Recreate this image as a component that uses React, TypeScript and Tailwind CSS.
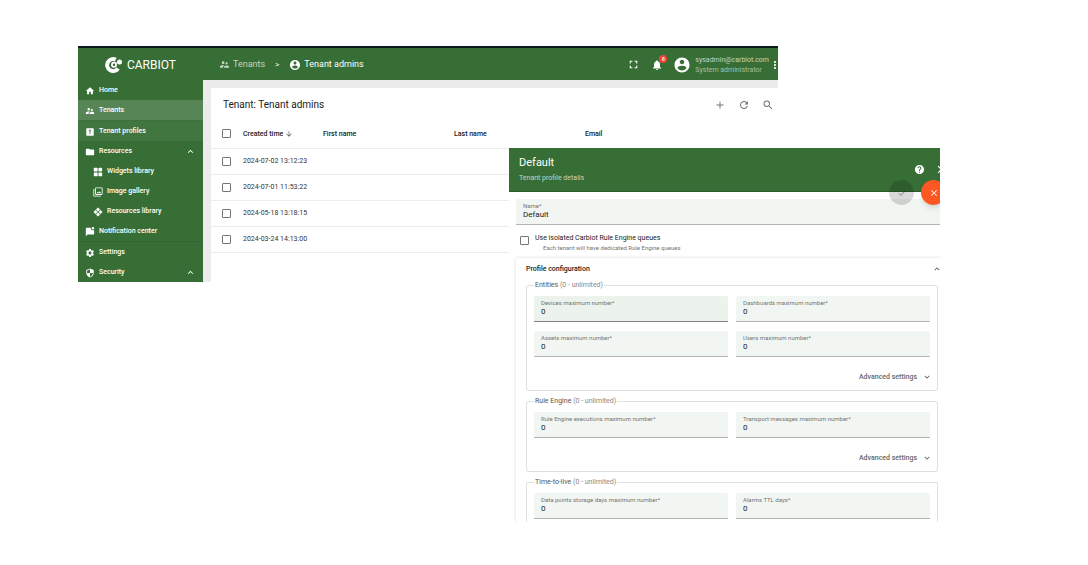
import type { ReactNode } from 'react'
import {
  MdAdd,
  MdArrowDownward,
  MdCheck,
  MdClose,
  MdExpandLess,
  MdExpandMore,
  MdFilter,
  MdFolder,
  MdFullscreen,
  MdHelp,
  MdHome,
  MdMoreVert,
  MdNotifications,
  MdRefresh,
  MdSearch,
  MdSecurity,
  MdSettings,
  MdSupervisorAccount,
} from 'react-icons/md'

const Logo = () => (
  <svg viewBox="0 0 36 36" className="w-[18px] h-[18px]" fill="none">
    <path d="M21.5 7.2A12 12 0 1 0 26.200 25" stroke="white" strokeWidth="8" />
    <circle cx="18" cy="17.500" r="4.200" stroke="white" strokeWidth="3.400" />
    <path d="M21 15l7-3" stroke="white" strokeWidth="2" />
    <circle cx="29" cy="12" r="5" fill="white" />
  </svg>
)

const Person = ({ size, className }: { size: number; className?: string }) => (
  <svg viewBox="0 0 24 24" width={size} height={size} fill="white" className={className}>
    <path d="M12 2C6.480 2 2 6.480 2 12s4.480 10 10 10 10-4.480 10-10S17.520 2 12 2zm0 3c1.660 0 3 1.340 3 3s-1.340 3-3 3-3-1.340-3-3 1.340-3 3-3zm0 14.200c-2.500 0-4.710-1.280-6-3.220.030-1.990 4-3.080 6-3.080 1.990 0 5.970 1.090 6 3.080-1.290 1.940-3.500 3.220-6 3.220z" />
  </svg>
)

const TenantBox = () => (
  <svg viewBox="0 0 24 24" className="w-[10px] h-[10px]">
    <rect x="3" y="3" width="18" height="18" rx="2" fill="white" />
    <path d="M9 8h6M12 8v9" stroke="#427640" strokeWidth="2" />
  </svg>
)

const Widgets = () => (
  <svg viewBox="0 0 24 24" className="w-[10px] h-[10px]" fill="white">
    <rect x="2" y="2" width="9" height="9" rx="1" />
    <rect x="13" y="2" width="9" height="9" rx="3" />
    <rect x="2" y="13" width="9" height="9" rx="1" />
    <rect x="13" y="13" width="9" height="9" rx="1" />
  </svg>
)

const RhombusSplit = () => (
  <svg viewBox="0 0 24 24" className="w-[10px] h-[10px]" fill="white">
    <path
      d="M12 2l4 4-4 4-4-4zM12 14l4 4-4 4-4-4zM6 8l4 4-4 4-4-4zM18 8l4 4-4 4-4-4z"
      stroke="white"
      strokeWidth="2"
      strokeLinejoin="round"
    />
  </svg>
)

const MessageBadge = () => (
  <svg viewBox="0 0 24 24" className="w-[10px] h-[10px]" fill="white">
    <path d="M22 7v9a2 2 0 0 1-2 2H6l-4 4V4a2 2 0 0 1 2-2h10.100A5 5 0 0 0 19 8c1.100 0 2.200-.4 3-1z" />
    <circle cx="19" cy="3" r="3" />
  </svg>
)

const menu = [
  { name: 'Home', icon: <MdHome size={10} /> },
  { name: 'Tenants', icon: <MdSupervisorAccount size={10} />, style: 'bg-[#588556]' },
  { name: 'Tenant profiles', icon: <TenantBox />, style: 'bg-[#427640] border-t border-[#3d723b]' },
  { name: 'Resources', icon: <MdFolder size={10} />, open: true },
  { name: 'Widgets library', icon: <Widgets />, sub: true },
  { name: 'Image gallery', icon: <MdFilter size={10} />, sub: true },
  { name: 'Resources library', icon: <RhombusSplit />, sub: true },
  { name: 'Notification center', icon: <MessageBadge /> },
  { name: 'Settings', icon: <MdSettings size={10} />, style: 'border-t border-[#326630]' },
  { name: 'Security', icon: <MdSecurity size={10} />, open: true },
]

const rows = ['2024-07-02 13:12:23', '2024-07-01 11:53:22', '2024-05-18 13:18:15', '2024-03-24 14:13:00']

function Checkbox({ label, id }: { label?: string; id?: string }) {
  return (
    <input
      type="checkbox"
      id={id}
      aria-label={label}
      className="appearance-none block w-[9px] h-[9px] shrink-0 border border-[#757575] rounded-[1px] bg-white"
    />
  )
}

function Sidebar() {
  return (
    <aside className="w-[125px] shrink-0 bg-[#376e35] text-white">
      <div className="h-8 flex items-center justify-center gap-1 pt-px text-[12px]">
        <Logo />
        <span>CARBIOT</span>
      </div>
      <nav>
        {menu.map((item) => (
          <a key={item.name} href="#" className={`block ${item.style ?? ''}`}>
            <span className={`h-5 flex items-center gap-1 pt-px pr-[7px] text-[7px] font-medium ${item.sub ? 'pl-[15px]' : 'pl-[7px]'}`}>
              {item.icon}
              <span className="grow">{item.name}</span>
              {item.open && <MdExpandLess size={11} />}
            </span>
          </a>
        ))}
      </nav>
    </aside>
  )
}

function TopBar() {
  return (
    <header className="h-8 flex items-center justify-between bg-[#376e35] text-white pl-4 pt-px text-[9px] overflow-hidden">
      <div className="flex items-center">
        <a href="#" className="flex items-center gap-[3px] text-[#c3d4c2]">
          <MdSupervisorAccount size={11} />
          Tenants
        </a>
        <span className="px-[10px] text-[8px]">&gt;</span>
        <a href="#" className="flex items-center gap-[3px]">
          <Person size={12} />
          Tenant admins
        </a>
      </div>
      <div className="flex items-center">
        <button aria-label="Fullscreen">
          <MdFullscreen size={13} />
        </button>
        <button aria-label="Notifications" className="relative ml-[11px]">
          <MdNotifications size={12} />
          <span className="absolute -top-1 -right-1 w-2 h-2 rounded-full bg-[#f44336] text-[5px] leading-[8px] font-medium text-center">8</span>
        </button>
        <Person size={18} className="ml-[10px]" />
        <div className="ml-1 text-[7px] leading-[10px] text-[#c3d4c2]">
          <div>sysadmin@carbiot.com</div>
          <div className="text-[#a5bfa4]">System administrator</div>
        </div>
        <button aria-label="More" className="-mr-[3px]">
          <MdMoreVert size={12} />
        </button>
      </div>
    </header>
  )
}

function TenantAdmins() {
  return (
    <section className="grow bg-white">
      <div className="h-8 flex items-center justify-between pl-3 pr-1 pt-px text-[#212121]">
        <h1 className="text-[10px]">Tenant: Tenant admins</h1>
        <div className="flex gap-[12px] text-[#757575]">
          <button aria-label="Add"><MdAdd size={12} /></button>
          <button aria-label="Refresh"><MdRefresh size={12} /></button>
          <button aria-label="Search"><MdSearch size={12} /></button>
        </div>
      </div>
      <table className="w-full table-fixed text-left text-[7px] text-[#333]">
        <thead>
          <tr className="h-[28px] border-b border-[#ececec] text-[#212121]">
            <th className="w-8 pl-[11px]"><Checkbox label="Select all" /></th>
            <th className="w-20 font-medium">
              <span className="flex items-center gap-[2px]">Created time <MdArrowDownward size={8} className="text-[#555]" /></span>
            </th>
            <th className="w-[131px] font-medium">First name</th>
            <th className="w-[131px] font-medium">Last name</th>
            <th className="font-medium">Email</th>
          </tr>
        </thead>
        <tbody>
          {rows.map((date) => (
            <tr key={date} className="h-[26px] border-b border-[#ececec]">
              <td className="pl-[11px]"><Checkbox label={date} /></td>
              <td className="whitespace-nowrap">{date}</td>
              <td></td>
              <td></td>
              <td></td>
            </tr>
          ))}
        </tbody>
      </table>
    </section>
  )
}

function Field({ id, label, value, active }: { id: string; label: string; value: string; active?: boolean }) {
  return (
    <div className={`h-[26px] pt-[3px] px-[7px] rounded-t-[2px] border-b ${active ? 'bg-[#ebf3ec] border-[#808080]' : 'bg-[#f1f6f2] border-[#b2b5b2]'}`}>
      <label htmlFor={id} className="block text-[6px] leading-[8px] text-[#757575]">{label}</label>
      <input id={id} defaultValue={value} className="block w-full h-[10px] text-[8px] leading-[10px] text-[#212121] bg-transparent outline-none" />
    </div>
  )
}

function Group({ title, children, last }: { title: string; children: ReactNode; last?: boolean }) {
  return (
    <fieldset className={`px-[7px] border-[#e0e0e0] min-w-0 ${last ? 'border-x border-t rounded-t-[2px] pb-[3px]' : 'border rounded-[2px] mb-[5px]'}`}>
      <legend className="px-[1px] text-[7px] leading-[10px] text-[#888]">
        <span className="text-[#555]">{title}</span> (0 - unlimited)
      </legend>
      <div className="grid grid-cols-2 gap-x-2 gap-y-[9px] pt-[6px]">{children}</div>
      {!last && (
        <div className="flex justify-end pt-[14px] pb-[7px]">
          <button className="h-3 flex items-center gap-[5px] -mr-[2px] text-[7px] font-medium text-[#666]">
            Advanced settings <MdExpandMore size={10} />
          </button>
        </div>
      )}
    </fieldset>
  )
}

function ProfileDrawer() {
  return (
    <section className="relative bg-white overflow-hidden text-[#212121]">
      <header className="h-11 flex justify-between bg-[#376e35] text-white pl-[10px] border-b border-[#2c5c2a]">
        <div>
          <h2 className="pt-2 text-[11px] leading-[14px]">Default</h2>
          <p className="pt-[2px] text-[7px] leading-[12px] text-[#c3d4c2]">Tenant profile details</p>
        </div>
        <div className="flex items-center gap-[10px] -mr-2">
          <button aria-label="Help"><MdHelp size={11} /></button>
          <button aria-label="Close"><MdClose size={13} /></button>
        </div>
      </header>
      <div className="absolute top-8 -right-[6px] flex gap-[7px]">
        <button aria-label="Apply" className="w-[25px] h-[25px] rounded-full bg-black/15 text-black/35 flex items-center justify-center">
          <MdCheck size={10} />
        </button>
        <button aria-label="Cancel" className="w-[25px] h-[25px] rounded-full bg-[#ff5722] text-white flex items-center justify-center shadow-md">
          <MdClose size={10} />
        </button>
      </div>
      <div className="pl-[7px] pt-[7px]">
        <div className="-mr-2">
          <Field id="name" label="Name*" value="Default" />
        </div>
        <div className="flex gap-[6px] pt-[9px] pl-1 h-[33px] text-[7px]">
          <div className="pt-[2px]"><Checkbox id="isolated" /></div>
          <div>
            <label htmlFor="isolated" className="block leading-[9px]">Use isolated Carbiot Rule Engine queues</label>
            <p className="pl-2 text-[6px] leading-[9px] text-[#757575]">Each tenant will have dedicated Rule Engine queues</p>
          </div>
        </div>
        <div className="-mr-2 pl-[10px] pr-[10px] shadow-[0_0_3px_rgba(0,0,0,0.15)]">
          <div className="h-[22px] flex items-center justify-between">
            <h3 className="text-[7px] font-medium">Profile configuration</h3>
            <button aria-label="Collapse" className="-mr-1 text-[#666]"><MdExpandLess size={10} /></button>
          </div>
          <Group title="Entities">
            <Field id="devices" label="Devices maximum number*" value="0" active />
            <Field id="dashboards" label="Dashboards maximum number*" value="0" />
            <Field id="assets" label="Assets maximum number*" value="0" />
            <Field id="users" label="Users maximum number*" value="0" />
          </Group>
          <Group title="Rule Engine">
            <Field id="executions" label="Rule Engine executions maximum number*" value="0" />
            <Field id="transport" label="Transport messages maximum number*" value="0" />
          </Group>
          <Group title="Time-to-live" last>
            <Field id="storage" label="Data points storage days maximum number*" value="0" />
            <Field id="alarms" label="Alarms TTL days*" value="0" />
          </Group>
        </div>
      </div>
    </section>
  )
}

export default function App() {
  return (
    <div className="min-h-screen bg-white font-['Roboto',sans-serif] grid items-start grid-cols-[78fr_431fr_269fr_162fr_148fr]">
      <div className="col-start-2 col-span-2 row-start-1 mt-[46px] min-w-0 border-t-2 border-[#0c1a1c] flex">
        <Sidebar />
        <div className="grow min-w-0 flex flex-col bg-[#ececec]">
          <TopBar />
          <div className="grow flex flex-col pl-2 pt-2">
            <TenantAdmins />
          </div>
        </div>
      </div>
      <div className="col-start-3 col-span-2 row-start-1 mt-[148px] min-w-0 z-10">
        <ProfileDrawer />
      </div>
    </div>
  )
}
